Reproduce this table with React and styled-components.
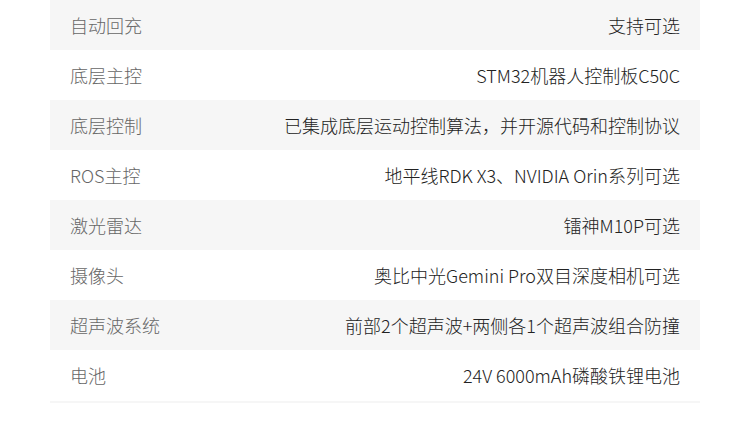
import React from "react";
import styled, { createGlobalStyle } from "styled-components";

const Global = createGlobalStyle`
  html, body { margin: 0; padding: 0; background: #fff; }
  body { font-family: "Noto Sans CJK SC", "Noto Sans", sans-serif; }
`;

const Page = styled.div`
  width: 750px;
  padding: 0 50px;
  box-sizing: border-box;
`;

const Table = styled.div`
  display: flex;
  flex-direction: column;
  border-bottom: 2px solid #f6f6f6;
  padding-bottom: 1px;
`;

const Row = styled.div`
  display: flex;
  align-items: center;
  justify-content: space-between;
  height: 50px;
  padding: 0 20px;
  background: ${(p) => (p.$shade ? "#f6f6f6" : "#fff")};
  font-size: 18px;
  font-weight: 300;
  line-height: 1;
`;

const Label = styled.span`
  color: #666;
`;

const Value = styled.span`
  color: #222;
  text-align: right;
`;

const rows = [
  ["自动回充", "支持可选"],
  ["底层主控", "STM32机器人控制板C50C"],
  ["底层控制", "已集成底层运动控制算法，并开源代码和控制协议"],
  ["ROS主控", "地平线RDK X3、NVIDIA Orin系列可选"],
  ["激光雷达", "镭神M10P可选"],
  ["摄像头", "奥比中光Gemini Pro双目深度相机可选"],
  ["超声波系统", "前部2个超声波+两侧各1个超声波组合防撞"],
  ["电池", "24V 6000mAh磷酸铁锂电池"],
];

export default function App() {
  return (
    <>
      <Global />
      <Page>
        <Table>
          {rows.map(([k, v], i) => (
            <Row key={k} $shade={i % 2 === 0}>
              <Label>{k}</Label>
              <Value>{v}</Value>
            </Row>
          ))}
        </Table>
      </Page>
    </>
  );
}
